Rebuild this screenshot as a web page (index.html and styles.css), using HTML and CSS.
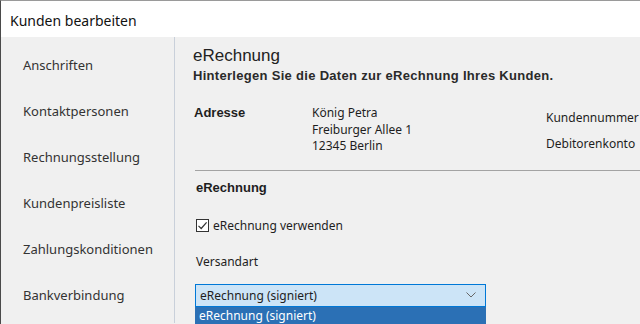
FILE: index.html
```html
<!DOCTYPE html>
<html lang="de">
<head>
  <meta charset="UTF-8">
  <title>Kunden bearbeiten</title>
  <link rel="stylesheet" href="styles.css">
</head>
<body>
  <div class="window">
    <div class="titlebar">Kunden bearbeiten</div>

    <div class="main">
      <ul class="sidebar">
        <li>Anschriften</li>
        <li>Kontaktpersonen</li>
        <li>Rechnungsstellung</li>
        <li>Kundenpreisliste</li>
        <li>Zahlungskonditionen</li>
        <li>Bankverbindung</li>
      </ul>

      <div class="content">
        <h1 class="title">eRechnung</h1>
        <p class="subtitle">Hinterlegen Sie die Daten zur eRechnung Ihres Kunden.</p>

        <div class="address">
          <div class="address-label">Adresse</div>
          <div class="address-lines">
            <div>König Petra</div>
            <div>Freiburger Allee 1</div>
            <div>12345 Berlin</div>
          </div>
          <div class="address-meta">
            <div>Kundennummer</div>
            <div>Debitorenkonto</div>
          </div>
        </div>

        <div class="section">
          <h2 class="section-title">eRechnung</h2>

          <label class="check">
            <span class="check-box">
              <svg width="11" height="11" viewBox="0 0 11 11"><path d="M1.5 5.8 L4.2 8.5 L9.6 2.3" fill="none" stroke="#333" stroke-width="1.2"/></svg>
            </span>
            eRechnung verwenden
          </label>

          <div class="field-label">Versandart</div>
          <div class="select">
            <span>eRechnung (signiert)</span>
            <svg width="10" height="6" viewBox="0 0 10 6"><path d="M0.5 0.5 L5 5 L9.5 0.5" fill="none" stroke="#666" stroke-width="1"/></svg>
          </div>
          <div class="select-list">
            <div class="select-option">eRechnung (signiert)</div>
          </div>
        </div>
      </div>
    </div>
  </div>
</body>
</html>
```

FILE: styles.css
```css
body {
  margin: 0;
  background-color: #f0f0f0;
  font-family: 'Noto Sans', 'Open Sans', sans-serif;
  color: #1e1e1e;
  overflow: hidden;
}
.window {
  border-left: 1px solid #4a4a4a;
  border-top: 1px solid #9a9a9a;
  height: 323px;
}
.titlebar {
  height: 34px;
  padding: 2px 0 0 9px;
  background-color: #fff;
  font-size: 14px;
  line-height: 36px;
  color: #111;
}
.main {
  display: flex;
  height: 286px;
}
.sidebar {
  list-style: none;
  margin: 0;
  padding: 5px 0 0 0;
  width: 173px;
  border-right: 1px solid #c9d0da;
}
.sidebar li {
  height: 46px;
  line-height: 46px;
  padding-left: 22px;
  font-size: 13px;
  color: #333;
}
.content {
  flex: 1;
  padding: 9px 0 0 18px;
}
.title {
  margin: 0;
  font-family: 'Liberation Sans', Arial, sans-serif;
  font-weight: normal;
  font-size: 17px;
  line-height: 20px;
  color: #222;
}
.subtitle {
  margin: 1px 0 0 0;
  font-family: 'Liberation Sans', Arial, sans-serif;
  font-weight: bold;
  font-size: 13px;
  line-height: 18px;
  letter-spacing: 0.3px;
  color: #2a2a2a;
}
.address {
  display: grid;
  grid-template-columns: 119px 234px 1fr;
  margin-top: 20px;
  font-size: 12px;
  line-height: 16.5px;
}
.address-label {
  padding-left: 1px;
  font-family: 'Liberation Sans', Arial, sans-serif;
  font-weight: bold;
  font-size: 13px;
}
.address-meta {
  display: flex;
  flex-direction: column;
  gap: 9.5px;
  padding-top: 5px;
}
.section {
  margin-top: 15px;
  margin-left: 2px;
  border-top: 1px solid #a3a3a3;
}
.section-title {
  margin: 8px 0 0 1px;
  font-family: 'Liberation Sans', Arial, sans-serif;
  font-weight: bold;
  font-size: 13px;
  line-height: 17px;
}
.check {
  display: flex;
  align-items: center;
  gap: 4px;
  margin: 22px 0 0 1px;
  font-size: 12px;
  line-height: 16px;
}
.check-box {
  width: 13px;
  height: 13px;
  border: 1px solid #333;
  background-color: #fff;
  box-sizing: border-box;
  display: flex;
  align-items: center;
  justify-content: center;
}
.field-label {
  margin: 20px 0 0 1px;
  font-size: 12px;
  line-height: 16px;
}
.select {
  display: flex;
  justify-content: space-between;
  align-items: center;
  width: 291px;
  height: 23px;
  margin-top: 14px;
  padding: 0 9px 0 4px;
  box-sizing: border-box;
  background-color: #cce4f7;
  border: 1px solid #0078d7;
  font-size: 12px;
}
.select-list {
  width: 291px;
  background-color: #2b70b5;
}
.select-option {
  padding-left: 4px;
  font-size: 12px;
  line-height: 18px;
  color: #fff;
}
```
